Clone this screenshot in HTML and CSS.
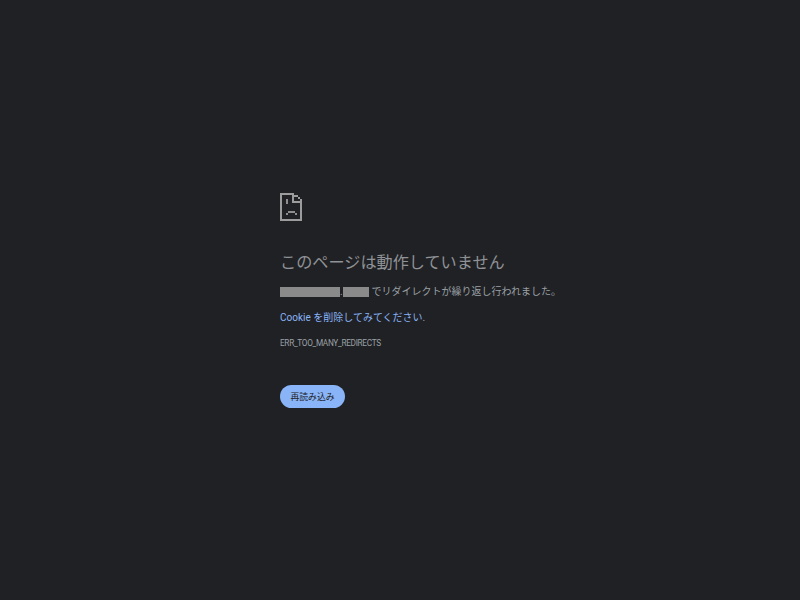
FILE: index.html
```html
<!DOCTYPE html>
<html lang="ja">
<head>
<meta charset="utf-8">
<title>このページは動作していません</title>
<link rel="stylesheet" href="styles.css">
</head>
<body>
<main class="error">
  <svg class="icon" width="22" height="28" viewBox="0 0 22 28" shape-rendering="crispEdges" aria-hidden="true">
    <path class="sheet" d="M0 0H14V2H2V26H20V8H22V28H0Z"/>
    <path class="sheet" d="M12 0H14V8H22V10H12Z"/>
    <path class="sheet" d="M14 2H18V4H14ZM18 4H20V6H18ZM20 6H22V8H20Z"/>
    <path class="face" d="M6 6H8V11H6ZM6 20H8V22H6ZM8 18H15V20H8ZM15 20H17V22H15Z"/>
  </svg>
  <h1 class="title">このページは動作していません</h1>
  <p class="message"><span class="redacted redacted-long"></span><span class="dot">.</span><span class="redacted redacted-short"></span> でリダイレクトが繰り返し行われました。</p>
  <p class="hint"><a class="link" href="#">Cookie を削除してみてください</a>.</p>
  <div class="code">ERR_TOO_MANY_REDIRECTS</div>
  <button class="reload" type="button">再読み込み</button>
</main>
</body>
</html>
```
FILE: styles.css
```css
html, body { margin: 0; height: 100%; }
body {
  background: #202124;
  color: #9aa0a6;
  font-family: Roboto, "Noto Sans CJK JP", sans-serif;
  font-size: 10px;
}
.error {
  box-sizing: border-box;
  width: 620px;
  padding: 193px 0 0 280px;
}
.icon { display: block; }
.sheet { fill: #9c9c9c; }
.face { fill: #8e8e8e; }
.title {
  margin: 32px 0 0;
  font-size: 16.15px;
  font-weight: 400;
  line-height: 20px;
  color: #8f9296;
}
.message {
  margin: 11px 0 0;
  line-height: 15px;
  display: flex;
  align-items: center;
  white-space: pre;
}
.redacted { display: inline-block; flex: none; height: 10px; background: #8a8a8a; }
.redacted-long { width: 60px; }
.redacted-short { width: 26px; }
.dot { flex: none; width: 3px; }
.hint { margin: 11px 0 0; line-height: 15px; }
.link { color: #8ab4f8; text-decoration: none; }
.code { margin-top: 12px; font-size: 8.25px; letter-spacing: -0.32px; line-height: 12px; text-transform: uppercase; }
.reload {
  display: block;
  margin-top: 36px;
  width: 65px;
  height: 23px;
  padding: 0;
  border: 0;
  border-radius: 12px;
  background: #8ab4f8;
  color: #202124;
  font: 400 8.8px Roboto, "Noto Sans CJK JP", sans-serif;
}
```
